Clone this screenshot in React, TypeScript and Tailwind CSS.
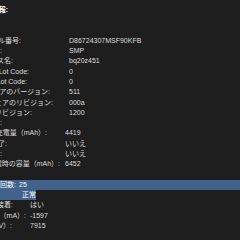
import React from "react";

type Row = {
  label: string;
  value?: string;
  // label cell: width = value column, right padding = gap before value
  box: string;
  head?: boolean;
  sel?: "line" | "text";
};

const rows: Row[] = [
  { label: "バッテリー情報:", box: "w-[8px]", head: true },
  { label: "", box: "w-0" },
  { label: "モデル情報:", box: "w-0" },
  { label: "シリアル番号:", value: "D86724307MSF90KFB", box: "w-[69px] pr-[48px]" },
  { label: "製造元:", value: "SMP", box: "w-[69px] pr-[67px]" },
  { label: "デバイス名:", value: "bq20z451", box: "w-[69px] pr-[56px]" },
  { label: "Pack Lot Code:", value: "0", box: "w-[69px] pr-[40px]" },
  { label: "PCB Lot Code:", value: "0", box: "w-[69px] pr-[42px]" },
  { label: "ファームウェアのバージョン:", value: "511", box: "w-[69px] pr-[19px]" },
  { label: "ハードウェアのリビジョン:", value: "000a", box: "w-[69px] pr-[16px]" },
  { label: "セルのリビジョン:", value: "1200", box: "w-[69px] pr-[37px]" },
  { label: "充電情報:", box: "w-[2px]" },
  { label: "残りの充電量（mAh）:", value: "4419", box: "w-[65px] pr-[18px]" },
  { label: "充電完了:", value: "いいえ", box: "w-[65px] pr-[58px]" },
  { label: "充電中:", value: "いいえ", box: "w-[65px] pr-[63px]" },
  { label: "フル充電時の容量（mAh）:", value: "6452", box: "w-[65px] pr-[5px]" },
  { label: "健康状態情報:", box: "w-0" },
  { label: "充放電回数:", value: "25", box: "w-[19px] pr-[3px]", sel: "line" },
  { label: "状態:", value: "正常", box: "w-[19px] pr-[22px]", sel: "text" },
  { label: "バッテリー装着:", value: "はい", box: "w-[30px] pr-[17px]" },
  { label: "アンペア数（mA）:", value: "-1597", box: "w-[30px] pr-[4px]" },
  { label: "電圧（mV）:", value: "7915", box: "w-[30px] pr-[18px]" },
];

function InfoRow({ row }: { row: Row }) {
  const label = (
    <span className={`flex shrink-0 justify-end overflow-hidden ${row.box}`}>
      <span className={row.head ? "font-bold text-white" : ""}>{row.label}</span>
    </span>
  );

  if (row.sel === "text") {
    return (
      <div className="flex h-[10.3px]">
        <div className="flex bg-[#40628b] text-white">
          {label}
          <span>{row.value}</span>
        </div>
      </div>
    );
  }

  return (
    <div className={`flex h-[10.3px] ${row.sel === "line" ? "bg-[#40628b] text-white" : ""}`}>
      {label}
      {row.value && <span>{row.value}</span>}
    </div>
  );
}

export default function App() {
  return (
    <div className="h-[240px] w-[240px] overflow-hidden whitespace-nowrap bg-[#1e1e1e] pt-[4.85px] font-['Liberation_Sans','Noto_Sans_CJK_JP',sans-serif] text-[7px] leading-[10.3px] text-[#dcdcdc]">
      {rows.map((row, i) => (
        <InfoRow key={i} row={row} />
      ))}
    </div>
  );
}
